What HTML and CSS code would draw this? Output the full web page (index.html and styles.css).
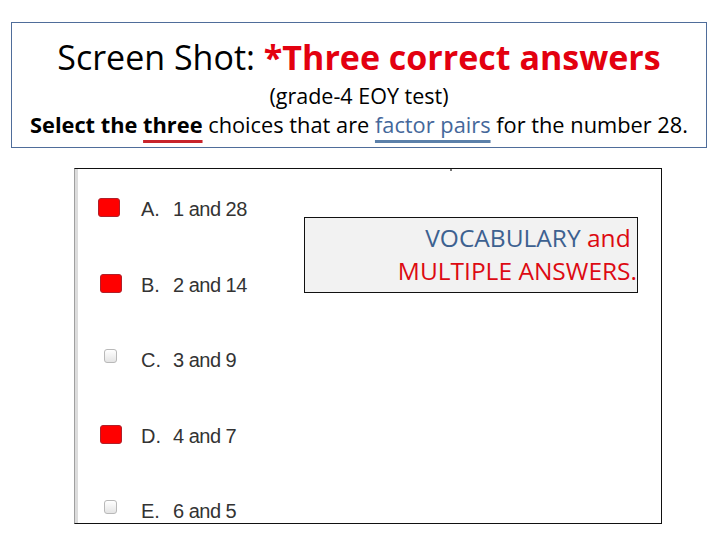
FILE: index.html
```html
<!DOCTYPE html>
<html>
<head>
<meta charset="utf-8">
<link rel="stylesheet" href="styles.css">
</head>
<body>
<div class="page">
  <div class="header">
    <div class="title">Screen Shot: <span class="red-bold">*Three correct answers</span></div>
    <div class="sub">(grade-4 EOY test)</div>
    <div class="question"><b>Select the <span class="ul-red">three</span></b> choices that are <span class="ul-blue">factor pairs</span> for the number 28.</div>
  </div>
  <div class="shot">
    <span class="dot"></span>
    <div class="row"><span class="cb cb-on cb-a"></span><span class="letter">A.</span><span class="ans">1 and 28</span></div>
    <div class="row"><span class="cb cb-on"></span><span class="letter">B.</span><span class="ans">2 and 14</span></div>
    <div class="row"><span class="cb cb-off"></span><span class="letter">C.</span><span class="ans">3 and 9</span></div>
    <div class="row"><span class="cb cb-on"></span><span class="letter">D.</span><span class="ans">4 and 7</span></div>
    <div class="row"><span class="cb cb-off"></span><span class="letter">E.</span><span class="ans">6 and 5</span></div>
    <div class="note"><span class="blue">VOCABULARY</span> <span class="red">and&nbsp;</span><br><span class="red">MULTIPLE ANSWERS.</span></div>
  </div>
</div>
</body>
</html>
```
FILE: styles.css
```css
html, body {
  margin: 0;
  padding: 0;
  background: #ffffff;
}
.page {
  width: 720px;
  height: 540px;
  padding-top: 22px;
  box-sizing: border-box;
  font-family: "Open Sans", Lato, sans-serif;
  color: #000;
}
.header {
  margin-left: 11px;
  width: 696px;
  height: 126px;
  box-sizing: border-box;
  border: 1px solid #4f6d9a;
  display: flex;
  flex-direction: column;
  align-items: center;
  padding-top: 13px;
}
.title {
  font-size: 34px;
  line-height: 42px;
  white-space: nowrap;
}
.red-bold {
  color: #e3000f;
  font-weight: bold;
}
.sub {
  font-size: 21.5px;
  line-height: 26px;
  margin-top: 5px;
}
.question {
  font-size: 21.8px;
  line-height: 26px;
  margin-top: 3px;
  white-space: nowrap;
}
.ul-red {
  text-decoration: underline;
  text-decoration-color: #c8242b;
  text-decoration-thickness: 3px;
  text-underline-offset: 7px;
}
.ul-blue {
  color: #44679a;
  text-decoration: underline;
  text-decoration-color: #5b80aa;
  text-decoration-thickness: 3px;
  text-underline-offset: 7px;
}
.shot {
  position: relative;
  margin-top: 20px;
  margin-left: 74px;
  width: 588px;
  height: 356px;
  box-sizing: border-box;
  border: 1px solid #111;
  border-left: 1px solid #a0a0a0;
  box-shadow: inset 3px 0 0 #dcdcdc;
  padding-left: 2px;
  padding-top: 2px;
  overflow: hidden;
  font-family: "Liberation Sans", Arial, sans-serif;
}
.dot {
  position: absolute;
  left: 375px;
  top: 0;
  width: 2px;
  height: 2px;
  background: #777;
}
.row {
  height: 75.5px;
  display: flex;
  align-items: flex-start;
}
.cb {
  display: block;
  box-sizing: border-box;
  flex: none;
}
.cb-on {
  width: 22px;
  height: 19px;
  margin-left: 23px;
  margin-right: 19px;
  margin-top: 27px;
  background: #ff0000;
  border: 1px solid #b0202a;
  border-radius: 3px;
}
.cb-a {
  margin-left: 21px;
  margin-right: 21px;
}
.cb-off {
  width: 13px;
  height: 14px;
  margin-left: 27px;
  margin-right: 24px;
  margin-top: 27px;
  background: linear-gradient(#ffffff, #e4e4e4);
  border: 1px solid #b9b9b9;
  border-radius: 3px;
}
.letter {
  width: 32px;
  font-size: 20px;
  line-height: 24px;
  margin-top: 26px;
  color: #333;
}
.ans {
  font-size: 20px;
  line-height: 24px;
  margin-top: 26px;
  color: #333;
  letter-spacing: -0.5px;
}
.note {
  position: absolute;
  left: 229px;
  top: 48px;
  width: 334px;
  height: 76px;
  box-sizing: border-box;
  border: 1px solid #111;
  background: #f2f2f2;
  text-align: right;
  font-family: "Open Sans", Lato, sans-serif;
  font-size: 24.5px;
  line-height: 33px;
  padding-top: 3px;
}
.blue {
  color: #3d6190;
}
.red {
  color: #dd0a12;
}
```
